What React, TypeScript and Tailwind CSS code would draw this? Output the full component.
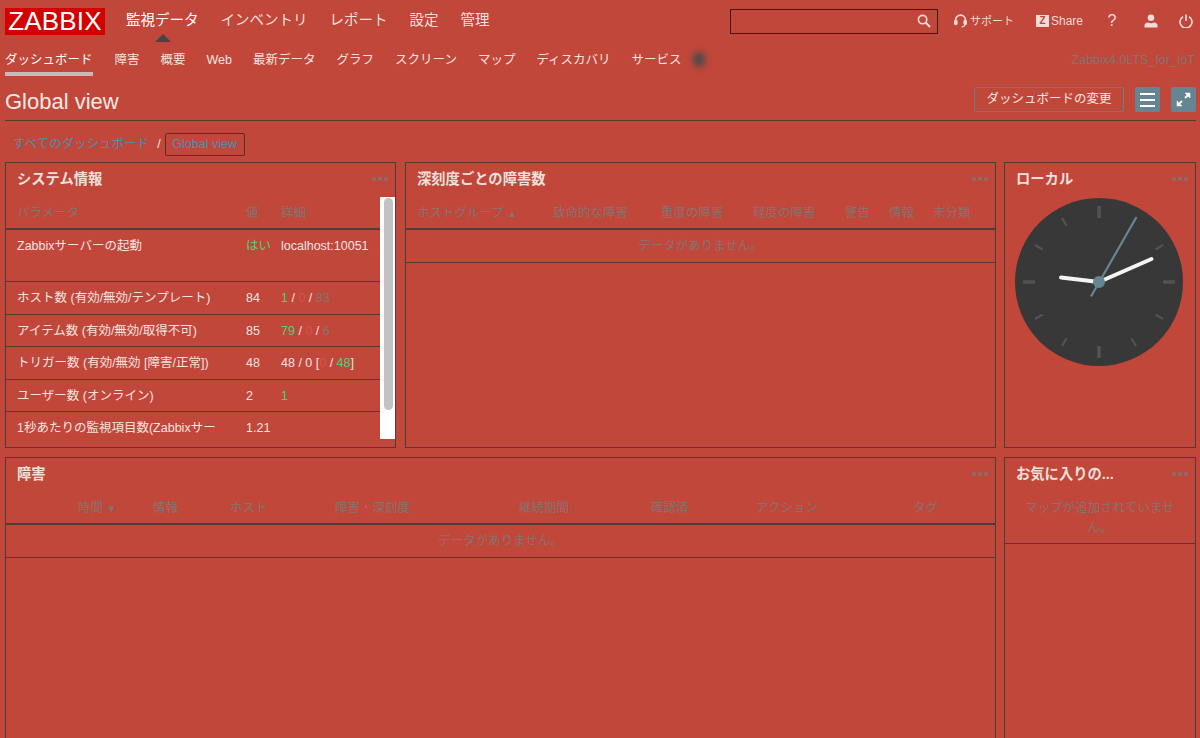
import React from "react";

const FONT = { fontFamily: '"Liberation Sans","Noto Sans CJK JP",sans-serif' };

function Dots() {
  return (
    <div className="absolute right-[7px] top-[14px] flex gap-[2px]">
      <span className="w-[4px] h-[4px] rounded-full bg-[#85716d]" />
      <span className="w-[4px] h-[4px] rounded-full bg-[#85716d]" />
      <span className="w-[4px] h-[4px] rounded-full bg-[#85716d]" />
    </div>
  );
}

function Widget({ title, className, children }: { title: string; className: string; children?: React.ReactNode }) {
  return (
    <section className={`relative flex flex-col border border-[#4d3d39] overflow-hidden ${className}`}>
      <h2 className="h-[34px] shrink-0 pl-[11px] flex items-center text-[14.3px] font-bold text-[#eee0dd]">{title}</h2>
      <Dots />
      {children}
    </section>
  );
}

const G = "text-[#4fd17a]";
const R = "text-[#d9524a]";
const M = "text-[#857470]";

function Row({ h, a, b, c }: { h: string; a: string; b: React.ReactNode; c?: React.ReactNode }) {
  return (
    <div className={`grid grid-cols-[229px_35px_1fr] pl-[11px] pt-[7px] shrink-0 border-b border-[#4d3d39] leading-[19px] whitespace-nowrap ${h}`}>
      <div>{a}</div>
      <div className="whitespace-normal">{b}</div>
      <div>{c}</div>
    </div>
  );
}

function Clock() {
  const ticks = [];
  for (let i = 0; i < 12; i++) {
    const major = i % 3 === 0;
    ticks.push(
      <rect
        key={i}
        x={major ? -1.75 : -1.1}
        y={major ? -76 : -74}
        width={major ? 3.5 : 2.2}
        height={major ? 12 : 9}
        fill="#525252"
        transform={`rotate(${i * 30})`}
      />
    );
  }
  return (
    <svg width="168" height="168" viewBox="-84 -84 168 168" className="block">
      <circle r="84" fill="#383838" />
      {ticks}
      <line x1="-38" y1="-4.5" x2="0" y2="0" stroke="#f4f4f4" strokeWidth="4" strokeLinecap="round" />
      <line x1="52.5" y1="-23" x2="0" y2="0" stroke="#f4f4f4" strokeWidth="4" strokeLinecap="round" />
      <line x1="-8" y1="14.5" x2="37.5" y2="-65" stroke="#668592" strokeWidth="2.2" />
      <circle r="6" fill="#668592" />
    </svg>
  );
}

export default function App() {
  const sub = ["障害", "概要", "Web", "最新データ", "グラフ", "スクリーン", "マップ", "ディスカバリ", "サービス"];
  return (
    <div style={FONT} className="w-[1200px] h-[738px] overflow-hidden bg-[#c0473a] text-[12.5px] text-[#f3e3e0]">
      {/* top bar */}
      <header className="h-[42px] flex items-center pl-[5px] pr-[7px]">
        <div className="w-[100px] h-[27px] bg-[#d40000] text-white text-[26px] leading-[27px] text-center tracking-[0.2px]">ZABBIX</div>
        <nav className="flex ml-[21px] gap-[22px] text-[14.5px] text-[#f5dfdb]">
          <a className="relative text-white">
            監視データ
            <span className="absolute left-[29px] top-[24px] w-0 h-0 border-x-[8px] border-x-transparent border-b-[8px] border-b-[#454545]" />
          </a>
          <a>インベントリ</a>
          <a>レポート</a>
          <a>設定</a>
          <a>管理</a>
        </nav>
        <div className="ml-auto w-[208px] h-[25px] border border-[#33201c] flex items-center justify-end pr-[6px]">
          <svg width="14" height="14" viewBox="0 0 14 14" fill="none" stroke="#f0dcd8" strokeWidth="1.6">
            <circle cx="5.6" cy="5.6" r="4.2" />
            <path d="M8.8 8.8 L13 13" strokeWidth="2" />
          </svg>
        </div>
        <div className="flex items-center ml-[16px] w-[60px] text-[11px] text-[#f0dcd8] whitespace-nowrap">
          <svg width="13" height="14" viewBox="0 0 13 14" fill="none" stroke="#f0dcd8" strokeWidth="1.6" className="mr-[3px] shrink-0">
            <path d="M1.6 8 V6 a4.9 4.9 0 0 1 9.8 0 V8" />
            <rect x="0.8" y="6.5" width="2" height="4" rx="1" fill="#f0dcd8" />
            <rect x="10.2" y="6.5" width="2" height="4" rx="1" fill="#f0dcd8" />
            <path d="M11 10.5 Q10.5 13 7.5 13" strokeWidth="1.2" />
          </svg>
          サポート
        </div>
        <div className="flex items-center ml-[22px] text-[12px] text-[#f0dcd8]">
          <span className="w-[13px] h-[12px] bg-[#f0dcd8] text-[#c0473a] text-[10px] font-bold leading-[12px] text-center mr-[2px]">Z</span>
          Share
        </div>
        <span className="ml-[24px] w-[10px] text-[16px] text-[#f0dcd8] text-center">?</span>
        <svg width="14" height="14" viewBox="0 0 14 14" fill="#f0dcd8" className="ml-[27px]">
          <circle cx="7" cy="3.8" r="3.3" />
          <path d="M0.5 13.5 V11.5 Q0.5 9 4 8.6 Q7 10 10 8.6 Q13.5 9 13.5 11.5 V13.5 Z" />
        </svg>
        <svg width="14" height="14" viewBox="0 0 14 14" fill="none" stroke="#f0dcd8" strokeWidth="1.6" className="ml-[21px]">
          <path d="M4 2.8 A6 6 0 1 0 10 2.8" />
          <path d="M7 0.5 V7" />
        </svg>
      </header>

      {/* sub navigation */}
      <div className="h-[36px] flex pl-[5px] pr-[5px] relative">
        <div className="h-[34px] pt-[9px] border-b-[4px] border-[#c4bcba] text-white leading-[19px]">ダッシュボード</div>
        <nav className="flex gap-[21px] ml-[22px] pt-[9px] leading-[19px] text-[#f3e3e0]">
          {sub.map((s) => (
            <a key={s}>{s}</a>
          ))}
        </nav>
        <span className="ml-[11px] mt-[10px] w-[12px] h-[15px] rounded-full bg-[#4a4a4a] blur-[3px]" />
        <span className="ml-auto pt-[9px] leading-[19px] text-[#85746f]">Zabbix4.0LTS_for_IoT</span>
      </div>

      {/* page title */}
      <div className="mx-[5px] mr-[4px] h-[43px] border-b border-[#4d3d39] flex items-start justify-between">
        <h1 className="text-[22px] leading-[25px] pt-[11px] text-[#f5e8e5] font-normal">Global view</h1>
        <div className="flex items-center pt-[9px]">
          <button className="w-[150px] h-[25px] border border-[#6b7d85] rounded-[2px] text-[12.5px] text-[#f5e8e5]">ダッシュボードの変更</button>
          <button className="ml-[11px] w-[25px] h-[25px] rounded-[2px] bg-[#668592] flex flex-col items-center justify-center gap-[4px]">
            <span className="block w-[15px] h-[2px] bg-white" />
            <span className="block w-[15px] h-[2px] bg-white" />
            <span className="block w-[15px] h-[2px] bg-white" />
          </button>
          <button className="ml-[11px] w-[25px] h-[25px] rounded-[2px] bg-[#668592] flex items-center justify-center">
            <svg width="15" height="15" viewBox="0 0 15 15" fill="#fff" stroke="#fff">
              <path d="M9 1 H14 V6 Z" strokeWidth="0.5" />
              <path d="M1 9 V14 H6 Z" strokeWidth="0.5" />
              <path d="M12 3 L9 6 M3 12 L6 9" strokeWidth="1.8" />
            </svg>
          </button>
        </div>
      </div>

      {/* breadcrumb */}
      <div className="h-[41px] flex items-start pl-[13px] pt-[12px] text-[#4a8fb3]">
        <a className="leading-[22px]">すべてのダッシュボード</a>
        <span className="mx-[8px] leading-[22px] text-[#f3e3e0]">/</span>
        <a className="-ml-[4px] w-[80px] h-[23px] border border-[#5a2b27] rounded-[2px] leading-[21px] text-center">Global view</a>
      </div>

      {/* widgets */}
      <div className="flex flex-col gap-[9px] pl-[5px]">
        <div className="flex h-[286px]">
          <Widget title="システム情報" className="w-[391px] mr-[9px]">
            <div className="relative flex-1 overflow-hidden">
              <div className="w-[374px] flex flex-col h-[241px] overflow-hidden">
                <div className={`grid grid-cols-[229px_35px_1fr] pl-[11px] h-[33px] pt-[7px] leading-[19px] shrink-0 border-b-[2px] border-[#4d3d39] ${M}`}>
                  <div>パラメータ</div>
                  <div>値</div>
                  <div>詳細</div>
                </div>
                <Row h="h-[52px]" a="Zabbixサーバーの起動" b={<span className={G}>はい</span>} c="localhost:10051" />
                <Row h="h-[33px]" a="ホスト数 (有効/無効/テンプレート)" b="84" c={<><span className={G}>1</span> / <span className={R}>0</span> / <span className={M}>83</span></>} />
                <Row h="h-[32px]" a="アイテム数 (有効/無効/取得不可)" b="85" c={<><span className={G}>79</span> / <span className={R}>0</span> / <span className={M}>6</span></>} />
                <Row h="h-[33px]" a="トリガー数 (有効/無効 [障害/正常])" b="48" c={<>48 / 0 [<span className={R}>0</span> / <span className={G}>48</span>]</>} />
                <Row h="h-[32px]" a="ユーザー数 (オンライン)" b="2" c={<span className={G}>1</span>} />
                <Row h="h-[33px]" a="1秒あたりの監視項目数(Zabbixサー" b="1.21" />
              </div>
              <div className="absolute right-0 top-0 w-[15px] h-[242px] bg-white">
                <div className="ml-[4px] mt-[1px] w-[9px] h-[212px] rounded-full bg-[#c2c2c2]" />
              </div>
            </div>
          </Widget>
          <Widget title="深刻度ごとの障害数" className="w-[591px] mr-[8px]">
            <div className={`grid grid-cols-[136px_108px_92px_92px_44px_44px_1fr] pl-[11px] h-[33px] pt-[7px] leading-[19px] shrink-0 border-b-[2px] border-[#4d3d39] whitespace-nowrap ${M}`}>
              <div>
                ホストグループ <span className="text-[10px]">▲</span>
              </div>
              <div>致命的な障害</div>
              <div>重度の障害</div>
              <div>軽度の障害</div>
              <div>警告</div>
              <div>情報</div>
              <div>未分類</div>
            </div>
            <div className={`h-[33px] shrink-0 border-b border-[#4d3d39] flex items-center justify-center ${M}`}>データがありません。</div>
          </Widget>
          <Widget title="ローカル" className="w-[192px]">
            <div className="pl-[10px] pt-[1px]">
              <Clock />
            </div>
          </Widget>
        </div>

        <div className="flex h-[300px]">
          <Widget title="障害" className="w-[991px] mr-[8px]">
            <div className={`grid grid-cols-[75px_77px_105px_184px_132px_105px_157px_1fr] pl-[72px] h-[33px] pt-[7px] leading-[19px] shrink-0 border-b-[2px] border-[#4d3d39] whitespace-nowrap ${M}`}>
              <div>
                時間 <span className="text-[10px]">▼</span>
              </div>
              <div>情報</div>
              <div>ホスト</div>
              <div>障害・深刻度</div>
              <div>継続期間</div>
              <div>確認済</div>
              <div>アクション</div>
              <div>タグ</div>
            </div>
            <div className={`h-[33px] shrink-0 border-b border-[#4d3d39] flex items-center justify-center ${M}`}>データがありません。</div>
          </Widget>
          <Widget title="お気に入りの..." className="w-[192px]">
            <div className={`h-[52px] px-[16px] pt-[6px] shrink-0 border-b border-[#4d3d39] text-center leading-[20px] ${M}`}>マップが追加されていません。</div>
          </Widget>
        </div>
      </div>
    </div>
  );
}
